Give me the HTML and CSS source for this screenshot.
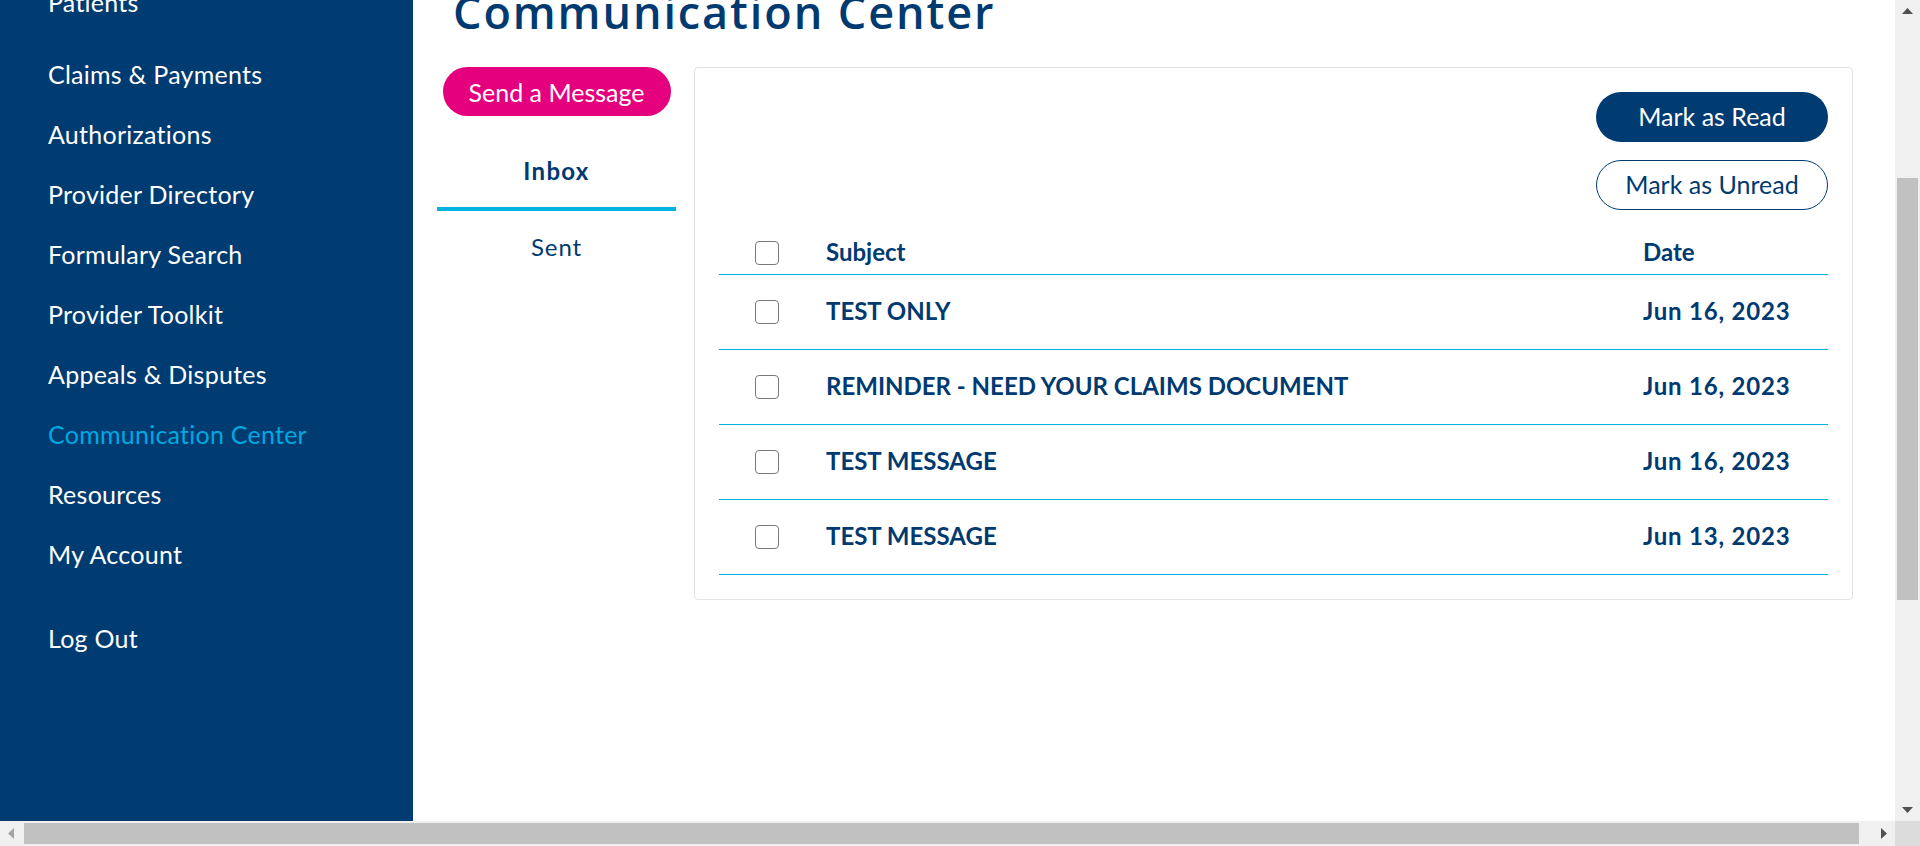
FILE: index.html
```html
<!DOCTYPE html>
<html lang="en">
<head>
<meta charset="utf-8">
<title>Communication Center</title>
<link rel="stylesheet" href="styles.css">
</head>
<body>
<div class="app">
  <div class="page">
    <div class="layout">
      <aside class="sidebar">
        <nav class="nav">
          <a class="nav-item nav-group-end" href="#">Patients</a>
          <a class="nav-item" href="#">Claims &amp; Payments</a>
          <a class="nav-item" href="#">Authorizations</a>
          <a class="nav-item" href="#">Provider Directory</a>
          <a class="nav-item" href="#">Formulary Search</a>
          <a class="nav-item" href="#">Provider Toolkit</a>
          <a class="nav-item" href="#">Appeals &amp; Disputes</a>
          <a class="nav-item active" href="#">Communication Center</a>
          <a class="nav-item" href="#">Resources</a>
          <a class="nav-item nav-section-end" href="#">My Account</a>
          <a class="nav-item" href="#">Log Out</a>
        </nav>
      </aside>
      <main class="main">
        <h1 class="title">Communication Center</h1>
        <div class="content">
          <div class="left-col">
            <button class="btn-send" type="button">Send a Message</button>
            <ul class="tabs">
              <li class="tab tab-active">Inbox</li>
              <li class="tab">Sent</li>
            </ul>
          </div>
          <section class="card">
            <div class="actions">
              <button class="btn btn-primary" type="button">Mark as Read</button>
              <button class="btn btn-outline" type="button">Mark as Unread</button>
            </div>
            <div class="table">
              <div class="trow thead">
                <span class="cb"></span>
                <span class="cell">Subject</span>
                <span class="cell">Date</span>
              </div>
              <div class="trow">
                <span class="cb"></span>
                <span class="cell">TEST ONLY</span>
                <span class="cell date">Jun 16, 2023</span>
              </div>
              <div class="trow">
                <span class="cb"></span>
                <span class="cell">REMINDER - NEED YOUR CLAIMS DOCUMENT</span>
                <span class="cell date">Jun 16, 2023</span>
              </div>
              <div class="trow">
                <span class="cb"></span>
                <span class="cell">TEST MESSAGE</span>
                <span class="cell date">Jun 16, 2023</span>
              </div>
              <div class="trow">
                <span class="cb"></span>
                <span class="cell">TEST MESSAGE</span>
                <span class="cell date">Jun 13, 2023</span>
              </div>
            </div>
          </section>
        </div>
      </main>
    </div>
  </div>
  <div class="vbar">
    <div class="sb-btn sb-btn-v">
      <svg width="11" height="6" viewBox="0 0 11 6"><polygon points="0,6 5.5,0 11,6" fill="#505050"/></svg>
    </div>
    <div class="vtrack"><div class="vthumb"></div></div>
    <div class="sb-btn sb-btn-v">
      <svg width="11" height="6" viewBox="0 0 11 6"><polygon points="0,0 5.5,6 11,0" fill="#505050"/></svg>
    </div>
  </div>
  <div class="hbar">
    <div class="sb-btn sb-btn-h">
      <svg width="6" height="11" viewBox="0 0 6 11"><polygon points="6,0 0,5.5 6,11" fill="#a3a3a3"/></svg>
    </div>
    <div class="htrack"><div class="hthumb"></div></div>
    <div class="sb-btn sb-btn-h">
      <svg width="6" height="11" viewBox="0 0 6 11"><polygon points="0,0 6,5.5 0,11" fill="#505050"/></svg>
    </div>
  </div>
  <div class="corner"></div>
</div>
<script src="script.js"></script>
</body>
</html>
```

FILE: styles.css
```css
* { box-sizing: border-box; }
html, body { margin: 0; padding: 0; height: 100%; }
body {
  font-family: Lato, "Liberation Sans", sans-serif;
  color: #003a70;
  background: #fff;
  overflow: hidden;
}

.app {
  display: grid;
  grid-template-columns: 1fr 25px;
  grid-template-rows: 1fr 25px;
  height: 100vh;
  width: 100vw;
}

.page {
  overflow: hidden;
  min-width: 0;
  min-height: 0;
}

.layout {
  display: flex;
  min-height: 1100px;
}

/* Sidebar */
.sidebar {
  width: 413px;
  flex: 0 0 413px;
  background: #003b71;
  padding-top: 72px;
}
.nav { display: flex; flex-direction: column; }
.nav-item {
  display: block;
  padding-left: 48px;
  font-size: 25px;
  letter-spacing: 0.25px;
  line-height: 60px;
  color: #fff;
  text-decoration: none;
  white-space: nowrap;
}
.nav-item.active { color: #00a9e0; }
.nav-group-end { margin-bottom: 12px; }
.nav-section-end { margin-bottom: 24px; }

/* Main */
.main {
  flex: 1;
  padding: 84px 42px 0 24px;
}
.title {
  margin: 0 0 27px 16px;
  font-family: "Open Sans", "Noto Sans", sans-serif;
  font-weight: 600;
  font-size: 45px;
  letter-spacing: 1.9px;
  line-height: 56px;
  color: #003a70;
  white-space: nowrap;
}
.content {
  display: flex;
  align-items: flex-start;
  gap: 18px;
}

.left-col {
  width: 239px;
  flex: 0 0 239px;
  display: flex;
  flex-direction: column;
  align-items: center;
}
.btn-send {
  width: 228px;
  height: 49px;
  border: none;
  border-radius: 25px;
  background: #e5007d;
  color: #fff;
  font-family: Lato, sans-serif;
  font-size: 25px;
  padding: 0;
  cursor: pointer;
}
.tabs {
  list-style: none;
  margin: 19px 0 0;
  padding: 0;
  width: 100%;
}
.tab {
  text-align: center;
  font-size: 24px;
  letter-spacing: 0.9px;
  line-height: 32px;
  padding: 20px 0;
  color: #003a70;
}
.tab-active {
  font-weight: 700;
  letter-spacing: 1.3px;
  border-bottom: 4px solid #00b2e2;
}

/* Card */
.card {
  flex: 1;
  min-width: 0;
  border: 1px solid #e3e3e3;
  border-radius: 4px;
  padding: 24px;
  background: #fff;
}
.actions {
  display: flex;
  flex-direction: column;
  align-items: flex-end;
  gap: 18px;
}
.btn {
  width: 232px;
  height: 50px;
  border-radius: 25px;
  font-family: Lato, sans-serif;
  font-size: 25px;
  padding: 0 0 2px;
  cursor: pointer;
}
.btn-primary {
  background: #003b71;
  color: #fff;
  border: none;
}
.btn-outline {
  background: #fff;
  color: #003a70;
  border: 1px solid #003b71;
}

.table { margin-top: 22px; }
.trow {
  display: grid;
  grid-template-columns: 107px 1fr 185px;
  align-items: center;
  height: 75px;
  border-bottom: 1px solid #00b2e2;
  font-size: 24px;
  font-weight: 700;
  color: #003a70;
}
.trow.thead { height: 43px; }
.cb {
  display: block;
  width: 24px;
  height: 24px;
  margin-left: 36px;
  border: 1px solid #7a7a7a;
  border-radius: 4px;
  background: #fff;
}
.cell {
  white-space: nowrap;
  padding-bottom: 4px;
}
.date { letter-spacing: 0.8px; }

/* Fake scrollbars */
.vbar {
  background: #f0f0f0;
  display: flex;
  flex-direction: column;
}
.hbar {
  background: #f0f0f0;
  display: flex;
}
.corner { background: #dcdcdc; }
.sb-btn {
  display: flex;
  align-items: center;
  justify-content: center;
  flex: 0 0 22px;
}
.sb-btn-v { height: 22px; }
.sb-btn-h { width: 22px; }
.vtrack { flex: 1; padding: 156px 2px 0; }
.vthumb { height: 422px; background: #c1c1c1; }
.htrack { flex: 1; padding: 2px 0 2px 2px; }
.hthumb { width: 1835px; height: 100%; background: #c1c1c1; }
```

FILE: script.js
```js
document.querySelector('.page').scrollTop = 100;
```
